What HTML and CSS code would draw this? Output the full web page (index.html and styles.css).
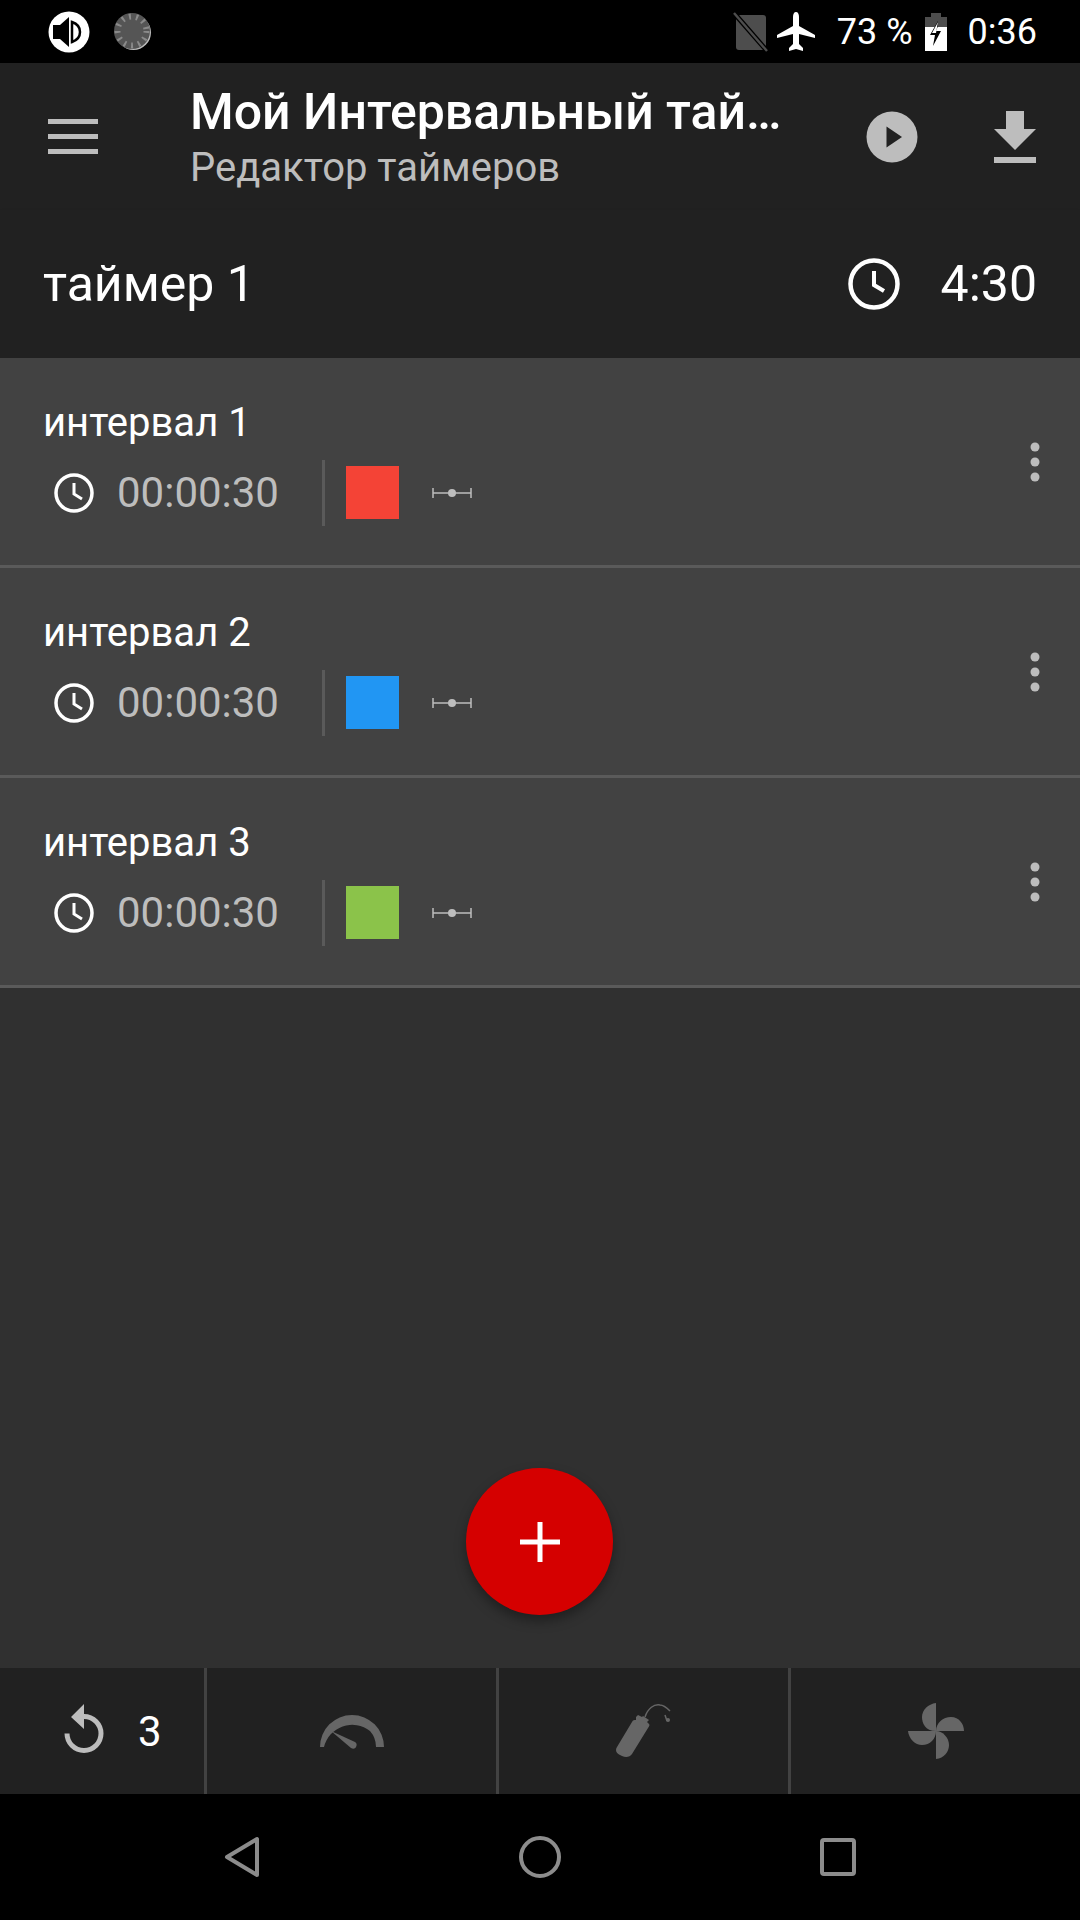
FILE: index.html
```html
<!DOCTYPE html>
<html lang="ru">
<head>
  <meta charset="UTF-8">
  <title>Редактор таймеров</title>
  <link rel="stylesheet" href="styles.css">
</head>
<body>

<div class="status-bar">
  <svg class="st-sound" width="42" height="42" viewBox="0 0 42 42">
    <circle cx="21" cy="21" r="20.5" fill="#fff"/>
    <path d="M5 14h7l9-8v30l-9-8H5z" fill="#000"/>
    <path d="M24 11c6 2 8 6 8 10s-2 8-8 10z" fill="none" stroke="#000" stroke-width="2.5"/>
  </svg>
  <svg class="st-sync" width="38" height="38" viewBox="0 0 38 38">
    <circle cx="19.5" cy="19.5" r="17.5" fill="#bbb"/>
    <circle cx="18" cy="18" r="18" fill="#555"/>
    <circle cx="18" cy="18" r="14.5" fill="none" stroke="#8a8a8a" stroke-width="6" stroke-dasharray="2 5.2"/>
  </svg>
  <div class="status-right">
    <svg class="st-sim" width="36" height="40" viewBox="0 0 36 40">
      <path d="M6 3h24q3 0 3 3v31q0 1-1 1H6q-3 0-3-3V6q0-3 3-3z" fill="#4d4d4d"/>
      <path d="M1 1l33 38" stroke="#000" stroke-width="5"/>
      <path d="M1 1l33 38" stroke="#4d4d4d" stroke-width="2.4"/>
    </svg>
    <svg class="st-plane" width="38" height="40" viewBox="0 0 38 40">
      <path d="M19 0c2 0 3 2 3 5v9l16 9v3l-16-4v10l4 4v3l-7-2-7 2v-3l4-4V22L0 26v-3l16-9V5c0-3 1-5 3-5z" fill="#fff"/>
    </svg>
    <span class="st-battery-text">73 %</span>
    <svg class="st-battery" width="22" height="38" viewBox="0 0 22 38">
      <path d="M6 0h10v4h6v10H0V4h6z" fill="#4d4d4d"/>
      <path d="M0 14h22v24H0z" fill="#fff"/>
      <path d="M13 8L5 22h5l-2 11 8-15h-5l2-5z" fill="#000"/>
      <path d="M13 9L7 20h4" fill="#fff"/>
    </svg>
    <span class="st-time">0:36</span>
  </div>
</div>

<header class="toolbar">
  <svg class="tb-menu" width="50" height="36" viewBox="0 0 50 36">
    <path d="M0 0h50v5H0zM0 15h50v5H0zM0 30h50v5H0z" fill="#bdbdbd"/>
  </svg>
  <div class="tb-titles">
    <div class="tb-title">Мой Интервальный таймер</div>
    <div class="tb-sub">Редактор таймеров</div>
  </div>
  <svg class="tb-play" width="52" height="52" viewBox="0 0 52 52">
    <circle cx="26" cy="26" r="25.5" fill="#bdbdbd"/>
    <path d="M20.500 15.500L36 26 20.500 36.500z" fill="#212121"/>
  </svg>
  <svg class="tb-download" width="42" height="52" viewBox="0 0 42 52">
    <path d="M12 0h18v18h12L21 39 0 18h12zM0 46h42v6H0z" fill="#bdbdbd"/>
  </svg>
</header>

<section class="timer-head">
  <span class="timer-name">таймер 1</span>
  <svg class="timer-clock" width="52" height="52" viewBox="0 0 52 52">
    <circle cx="26" cy="26" r="23.500" fill="none" stroke="#fff" stroke-width="4.500"/>
    <path d="M26 13v14l10 6" fill="none" stroke="#fff" stroke-width="4"/>
  </svg>
  <span class="timer-total">4:30</span>
</section>

<main class="content">
  <div class="interval">
    <div class="iv-main">
      <div class="iv-name">интервал 1</div>
      <div class="iv-info">
        <svg class="iv-clock" width="40" height="40" viewBox="0 0 40 40">
          <circle cx="20" cy="20" r="18" fill="none" stroke="#fff" stroke-width="3.500"/>
          <path d="M20 10v11l8 5" fill="none" stroke="#fff" stroke-width="3"/>
        </svg>
        <span class="iv-time">00:00:30</span>
        <span class="iv-sep"></span>
        <span class="iv-color red"></span>
        <svg class="iv-width" width="40" height="12" viewBox="0 0 40 12">
          <path d="M1 1v10M39 1v10M1 6h38" stroke="#bdbdbd" stroke-width="1.500" fill="none"/>
          <circle cx="20" cy="6" r="4" fill="#bdbdbd"/>
        </svg>
      </div>
    </div>
    <svg class="iv-more" width="10" height="40" viewBox="0 0 10 40">
      <circle cx="5" cy="5" r="4.500" fill="#bdbdbd"/><circle cx="5" cy="20" r="4.500" fill="#bdbdbd"/><circle cx="5" cy="35" r="4.500" fill="#bdbdbd"/>
    </svg>
  </div>

  <div class="interval">
    <div class="iv-main">
      <div class="iv-name">интервал 2</div>
      <div class="iv-info">
        <svg class="iv-clock" width="40" height="40" viewBox="0 0 40 40">
          <circle cx="20" cy="20" r="18" fill="none" stroke="#fff" stroke-width="3.500"/>
          <path d="M20 10v11l8 5" fill="none" stroke="#fff" stroke-width="3"/>
        </svg>
        <span class="iv-time">00:00:30</span>
        <span class="iv-sep"></span>
        <span class="iv-color blue"></span>
        <svg class="iv-width" width="40" height="12" viewBox="0 0 40 12">
          <path d="M1 1v10M39 1v10M1 6h38" stroke="#bdbdbd" stroke-width="1.500" fill="none"/>
          <circle cx="20" cy="6" r="4" fill="#bdbdbd"/>
        </svg>
      </div>
    </div>
    <svg class="iv-more" width="10" height="40" viewBox="0 0 10 40">
      <circle cx="5" cy="5" r="4.500" fill="#bdbdbd"/><circle cx="5" cy="20" r="4.500" fill="#bdbdbd"/><circle cx="5" cy="35" r="4.500" fill="#bdbdbd"/>
    </svg>
  </div>

  <div class="interval">
    <div class="iv-main">
      <div class="iv-name">интервал 3</div>
      <div class="iv-info">
        <svg class="iv-clock" width="40" height="40" viewBox="0 0 40 40">
          <circle cx="20" cy="20" r="18" fill="none" stroke="#fff" stroke-width="3.500"/>
          <path d="M20 10v11l8 5" fill="none" stroke="#fff" stroke-width="3"/>
        </svg>
        <span class="iv-time">00:00:30</span>
        <span class="iv-sep"></span>
        <span class="iv-color green"></span>
        <svg class="iv-width" width="40" height="12" viewBox="0 0 40 12">
          <path d="M1 1v10M39 1v10M1 6h38" stroke="#bdbdbd" stroke-width="1.500" fill="none"/>
          <circle cx="20" cy="6" r="4" fill="#bdbdbd"/>
        </svg>
      </div>
    </div>
    <svg class="iv-more" width="10" height="40" viewBox="0 0 10 40">
      <circle cx="5" cy="5" r="4.500" fill="#bdbdbd"/><circle cx="5" cy="20" r="4.500" fill="#bdbdbd"/><circle cx="5" cy="35" r="4.500" fill="#bdbdbd"/>
    </svg>
  </div>

  <button class="fab" type="button">
    <svg width="40" height="40" viewBox="0 0 40 40">
      <path d="M17.500 0h5v17.500H40v5H22.500V40h-5V22.500H0v-5h17.500z" fill="#fff"/>
    </svg>
  </button>
</main>

<div class="bottom-bar">
  <div class="bb-cell bb-repeat">
    <svg width="42" height="54" viewBox="0 0 42 54">
      <path d="M21 0v10a19.500 19.500 0 1 1-19.500 19.500h5A14.500 14.500 0 1 0 21 15v10L8 13z" fill="#bdbdbd"/>
    </svg>
    <span class="bb-count">3</span>
  </div>
  <div class="bb-cell">
    <svg width="64" height="35" viewBox="0 0 64 35">
      <path d="M0 33a32 32 0 0 1 64 0h-8a24 24 0 0 0-6-16 29 29 0 0 0-46 16z" fill="#666"/>
      <path d="M11 17l24 11c2 1 2 3 1 5s-3 2-5 1z" fill="#666"/>
    </svg>
  </div>
  <div class="bb-cell">
    <svg width="56" height="54" viewBox="0 0 56 54">
      <path d="M20 13l2-2 4 2 1-1 6 4-2 2 2 2c1 1 0 3-1 4L16 50c-2 3-6 4-10 2l-2-1c-4-2-5-5-3-8l15-25c1-2 2-2 4-2z" fill="#666"/>
      <path d="M29 13C32 4 38 0 44 1c3 0 7 3 10 6M49 11l2 6" fill="none" stroke="#666" stroke-width="1.500"/>
      <circle cx="52" cy="16" r="2" fill="#666"/>
    </svg>
  </div>
  <div class="bb-cell">
    <svg width="56" height="58" viewBox="0 0 56 58">
      <path d="M28 1v28C17 29 14 21 14 15 14 8 20 2 28 1z" fill="#666"/>
      <path d="M28 29h28C56 22 51 15 43 15c-8 0-15 6-15 14z" fill="#666"/>
      <path d="M28 29v28c8-1 13-7 13-14 0-7-6-14-13-14z" fill="#666"/>
      <path d="M28 29H0c1 8 7 14 14 14 8 0 14-6 14-14z" fill="#666"/>
    </svg>
  </div>
</div>

<nav class="nav-bar">
  <svg class="nav-back" width="36" height="42" viewBox="0 0 36 42">
    <path d="M33 3v36L3 21z" fill="none" stroke="#8c8c8c" stroke-width="4" stroke-linejoin="round"/>
  </svg>
  <svg class="nav-home" width="42" height="42" viewBox="0 0 42 42">
    <circle cx="21" cy="21" r="19" fill="none" stroke="#8c8c8c" stroke-width="4"/>
  </svg>
  <svg class="nav-recent" width="36" height="38" viewBox="0 0 36 38">
    <rect x="2" y="2" width="32" height="34" rx="2" fill="none" stroke="#8c8c8c" stroke-width="4"/>
  </svg>
</nav>

</body>
</html>
```

FILE: styles.css
```css
/* ----- page ----- */
* {
  box-sizing: border-box;
}
html, body {
  margin: 0;
  padding: 0;
}
body {
  width: 1080px;
  height: 1920px;
  display: flex;
  flex-direction: column;
  background: #303030;
  color: #fff;
  font-family: Roboto, "Noto Sans", sans-serif;
  overflow: hidden;
}
svg {
  display: block;
  flex: none;
}

/* ----- status bar ----- */
.status-bar {
  height: 63px;
  flex: none;
  display: flex;
  align-items: center;
  background: #000;
  padding: 0 43px 0 48px;
}
.st-sound {
  margin-right: 24px;
}
.status-right {
  margin-left: auto;
  display: flex;
  align-items: center;
  font-size: 36px;
}
.st-plane {
  margin-left: 8px;
}
.st-battery-text {
  margin-left: 22px;
}
.st-battery {
  margin-left: 12px;
}
.st-time {
  margin-left: 21px;
}

/* ----- toolbar ----- */
.toolbar {
  height: 147px;
  flex: none;
  display: flex;
  align-items: center;
  background: #212121;
  padding: 0 40px 0 48px;
}
.tb-menu {
  margin-right: 92px;
}
.tb-titles {
  width: 600px;
  margin-right: 76px;
}
.tb-title {
  font-size: 50px;
  font-weight: 500;
  line-height: 62px;
  white-space: nowrap;
  overflow: hidden;
  text-overflow: ellipsis;
}
.tb-sub {
  font-size: 40px;
  line-height: 50px;
  color: #bdbdbd;
}
.tb-play {
  margin-right: 76px;
}

/* ----- timer header ----- */
.timer-head {
  height: 148px;
  flex: none;
  display: flex;
  align-items: center;
  background: #212121;
  padding: 0 43px;
  box-shadow: 0 3px 4px rgba(0, 0, 0, 0.3);
  position: relative;
}
.timer-name {
  font-size: 50px;
  margin-right: auto;
}
.timer-total {
  font-size: 50px;
  margin-left: 41px;
}

/* ----- interval list ----- */
.content {
  flex: 1;
  position: relative;
}
.interval {
  height: 210px;
  display: flex;
  align-items: center;
  background: #424242;
  border-bottom: 3px solid #5a5a5a;
  padding: 0 40px 0 43px;
}
.iv-main {
  flex: 1;
}
.iv-name {
  font-size: 40px;
  line-height: 50px;
  margin-bottom: 12px;
}
.iv-info {
  display: flex;
  align-items: center;
  height: 66px;
  padding-left: 11px;
}
.iv-time {
  font-size: 42px;
  color: #bdbdbd;
  margin-left: 23px;
  width: 161px;
}
.iv-sep {
  width: 3px;
  height: 66px;
  background: #5a5a5a;
  margin-left: 44px;
}
.iv-color {
  width: 53px;
  height: 53px;
  margin-left: 21px;
}
.red {
  background: #f44336;
}
.blue {
  background: #2196f3;
}
.green {
  background: #8bc34a;
}
.iv-width {
  margin-left: 33px;
}

/* ----- add button ----- */
.fab {
  position: absolute;
  left: 466px;
  bottom: 53px;
  width: 147px;
  height: 147px;
  border: 0;
  border-radius: 50%;
  background: #d50000;
  display: flex;
  align-items: center;
  justify-content: center;
  box-shadow: 0 6px 12px rgba(0, 0, 0, 0.35);
}

/* ----- bottom bar ----- */
.bottom-bar {
  height: 126px;
  flex: none;
  display: grid;
  grid-template-columns: 207px 292px 292px 289px;
  background: #212121;
}
.bb-cell {
  display: flex;
  align-items: center;
  justify-content: center;
  border-right: 3px solid #424242;
}
.bb-cell:last-child {
  border-right: 0;
}
.bb-repeat {
  justify-content: flex-start;
  padding-left: 63px;
}
.bb-count {
  font-size: 42px;
  margin-left: 33px;
}

/* ----- navigation bar ----- */
.nav-bar {
  height: 126px;
  flex: none;
  display: flex;
  align-items: center;
  background: #000;
  padding-left: 224px;
}
.nav-home {
  margin-left: 259px;
}
.nav-recent {
  margin-left: 259px;
}
```
